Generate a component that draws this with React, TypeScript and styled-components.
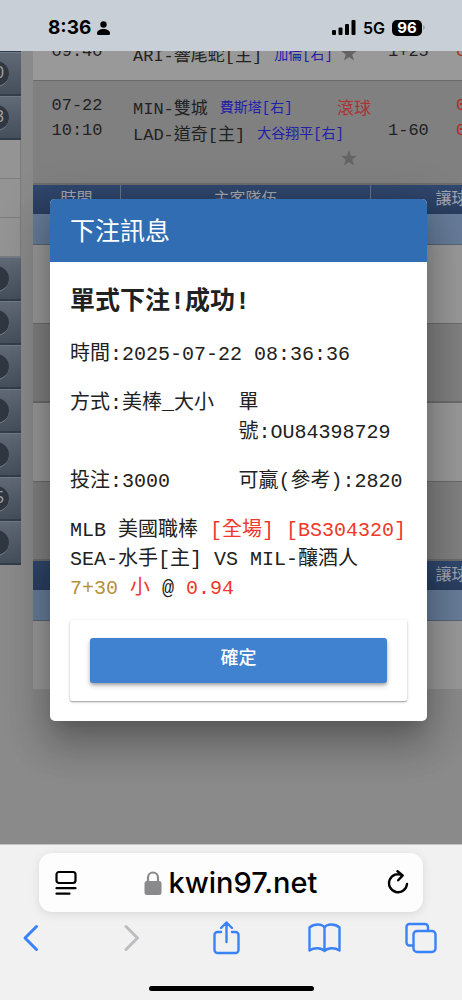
import React from "react";
import styled, { createGlobalStyle } from "styled-components";

const mono = `"Liberation Mono", "Noto Sans CJK TC", monospace`;
const sans = `Inter, "Liberation Sans", sans-serif`;

const Global = createGlobalStyle`
  *, *::before, *::after { box-sizing: border-box; }
  body { margin: 0; background: #888; }
  button, input { font: inherit; border: 0; padding: 0; background: none; }
`;

const Screen = styled.div`
  display: flex;
  flex-direction: column;
  min-height: 100vh;
  font-family: ${mono};
  overflow: hidden;
`;

/* Phone status bar */

const StatusBar = styled.header`
  display: flex;
  align-items: center;
  justify-content: space-between;
  height: 51px;
  padding: 4px 37px 0 48px;
  background: #c9cfd7;
  color: #000;
  font-family: ${sans};
`;

const StatusGroup = styled.div<{ $gap: number }>`
  display: flex;
  align-items: center;
  gap: ${(p) => p.$gap}px;
`;

const Clock = styled.span`
  font-size: 19px;
  font-weight: 700;
`;

const Network = styled.span`
  font-size: 16px;
  font-weight: 600;
`;

const Battery = styled.span`
  width: 30px;
  height: 16px;
  border-radius: 5px;
  background: #000;
  color: #fff;
  font-size: 15px;
  font-weight: 700;
  line-height: 16px;
  text-align: center;
`;

const BatteryGroup = styled.span`
  display: flex;
  align-items: center;
  gap: 1px;
`;

/* Page behind the dialog */

const Page = styled.main`
  position: relative;
  display: flex;
  align-items: flex-start;
  gap: 12px;
  flex: 1;
  overflow: hidden;
  background: #8a8a8a;
`;

const Sidebar = styled.nav`
  flex: none;
  display: flex;
  flex-direction: column;
  width: 21px;
  margin-top: -43px;
`;

const MenuButton = styled.button`
  display: flex;
  align-items: center;
  justify-content: flex-end;
  height: 44px;
  padding-right: 12px;
  border-top: 1px solid #6f7a87;
  border-bottom: 2px solid #333d4a;
  background: linear-gradient(#606975, #454f5c);
`;

const Count = styled.span`
  flex: none;
  display: block;
  width: 26px;
  height: 26px;
  padding-right: 5px;
  border-radius: 13px;
  border-bottom: 1px solid #77808a;
  background: #303741;
  color: #a0a0a0;
  font-family: "Liberation Sans", sans-serif;
  font-size: 16px;
  line-height: 24px;
  text-align: right;
`;

const MenuItem = styled.a`
  height: 39px;
  border-bottom: 1px solid #7c7c7c;
  border-right: 1px solid #7c7c7c;
  background: #949494;
`;

const Board = styled.div`
  flex: none;
  margin-top: -49px;
`;

const Table = styled.table`
  width: 500px;
  table-layout: fixed;
  border-collapse: separate;
  border-spacing: 0;
  color: #222;
  font-size: 17px;
`;

const Head = styled.th`
  height: 29px;
  padding: 0;
  border-right: 1px solid #66738a;
  background: linear-gradient(#31486f, #2a3e60);
  color: #a3a7ae;
  font-size: 16px;
  font-weight: 400;
  line-height: 24px;
`;

const LeagueCell = styled.td`
  height: 31px;
  padding: 0;
  border-bottom: 1px solid #566478;
  background: #677c99;
`;

const Cell = styled.td<{ $dark?: boolean; $height?: number; $last?: boolean }>`
  height: ${(p) => p.$height ?? 79}px;
  padding: 12px 0 0;
  border-bottom: ${(p) => (p.$last ? 0 : p.$dark ? 2 : 1)}px solid #6c6c6c;
  background: ${(p) => (p.$dark ? "#808080" : "#999")};
  vertical-align: top;
`;

const Times = styled.div`
  line-height: 25px;
  text-align: center;
`;

const TeamLine = styled.div`
  display: flex;
  align-items: center;
  gap: 8px;
  height: 26px;
  padding-left: 12px;
  white-space: nowrap;
`;

const Pitcher = styled.span`
  margin-left: 4px;
  color: #2020a8;
  font-size: 14px;
`;

const Live = styled.span`
  margin-left: auto;
  color: #a83636;
`;

const StarSlot = styled.span`
  display: flex;
  margin-left: auto;
  margin-right: 14px;
`;

const Odds = styled.div`
  display: grid;
  grid-template-columns: 68px 1fr;
  padding-left: 17px;
  line-height: 25px;
`;

const Price = styled.span`
  color: #b02c20;
`;

/* Dialog */

const Overlay = styled.div`
  position: absolute;
  inset: 0;
  display: flex;
  align-items: flex-start;
  padding: 148px 35px 0 50px;
`;

const Dialog = styled.section`
  flex: 1;
  min-width: 0;
  overflow: hidden;
  border-radius: 5px;
  background: #fff;
  color: #212121;
  font-size: 20px;
  line-height: 29px;
  box-shadow: 0 9px 46px 8px rgba(0, 0, 0, 0.14), 0 11px 15px -7px rgba(0, 0, 0, 0.12),
    0 24px 38px 3px rgba(0, 0, 0, 0.2);
`;

const Title = styled.h2`
  margin: 0;
  padding: 7px 20px 0;
  background: #316db2;
  color: #fff;
  font-size: 25px;
  font-weight: 400;
  line-height: 56px;
`;

const Body = styled.div`
  display: flex;
  flex-direction: column;
  gap: 20px;
  padding: 24px 20px 17px;
`;

const Result = styled.h3`
  margin: 0;
  font-size: 25px;
  font-weight: 600;
  line-height: 34px;
`;

const Line = styled.p`
  margin: 0;
`;

const Pair = styled.div`
  display: grid;
  grid-template-columns: 1fr 1fr;
`;

const Mark = styled.span<{ $tone: "red" | "gold" }>`
  color: ${(p) => (p.$tone === "red" ? "#f0372b" : "#b5913a")};
`;

const Actions = styled.div`
  display: flex;
  margin: 0 20px 20px;
  padding: 18px 20px;
  border-radius: 2px;
  box-shadow: 0 1px 3px rgba(0, 0, 0, 0.24), 0 1px 1px rgba(0, 0, 0, 0.2);
`;

const Confirm = styled.button`
  flex: 1;
  height: 45px;
  padding-bottom: 2px;
  border-radius: 3px;
  background: #4082cf;
  color: #fff;
  font-size: 18px;
  font-weight: 500;
  box-shadow: 0 2px 3px rgba(0, 0, 0, 0.24), 0 3px 6px rgba(0, 0, 0, 0.16);
`;

/* Browser controls */

const BrowserBar = styled.footer`
  display: flex;
  flex-direction: column;
  padding: 8px 0 9px;
  border-top: 1px solid #c4c4c6;
  background: #f1f1f2;
  font-family: ${sans};
`;

const AddressBar = styled.div`
  display: flex;
  align-items: center;
  justify-content: space-between;
  height: 59px;
  margin: 0 39px;
  padding: 0 13px 0 15px;
  border-radius: 13px;
  background: #fdfdfd;
  box-shadow: 0 2px 10px rgba(0, 0, 0, 0.1);
`;

const Address = styled.label`
  display: flex;
  align-items: center;
  gap: 7px;
`;

const AddressInput = styled.input`
  width: 152px;
  color: #000;
  font-size: 29px;
  font-weight: 500;
`;

const IconButton = styled.button`
  display: flex;
  flex: none;
`;

const Toolbar = styled.nav`
  display: flex;
  align-items: center;
  justify-content: space-between;
  height: 52px;
  padding: 0 24px 0 14px;
`;

const HomeIndicator = styled.div`
  width: 165px;
  height: 5px;
  margin: 22px auto 0;
  border-radius: 3px;
  background: #000;
`;

const Star = () => (
  <svg width="16" height="16" viewBox="0 0 16 16" fill="#646464" aria-hidden="true">
    <path d="M8 0l2 5.800 6 .1-4.800 3.700 1.800 6L8 12.100 3 15.600l1.800-6L0 5.900l6-.1z" />
  </svg>
);

const stroke = {
  fill: "none",
  strokeWidth: 2.4,
  strokeLinecap: "round" as const,
  strokeLinejoin: "round" as const,
};

const ToolIcon = ({ color = "#3a82f7", children }: { color?: string; children: React.ReactNode }) => (
  <svg width="34" height="36" viewBox="0 0 34 36" stroke={color} {...stroke} aria-hidden="true">
    {children}
  </svg>
);

const HeadRow = () => (
  <tr>
    <Head>時間</Head>
    <Head>主客隊伍</Head>
    <Head>讓球</Head>
  </tr>
);

const LeagueRow = () => (
  <tr>
    <LeagueCell colSpan={3} />
  </tr>
);

const EmptyRow = ({ dark, height, last }: { dark?: boolean; height?: number; last?: boolean }) => (
  <tr>
    <Cell colSpan={3} $dark={dark} $height={height} $last={last} />
  </tr>
);

const closedMenus = ["", "", "", "", "", "5", ""];

export default function App() {
  return (
    <Screen>
      <Global />
      <StatusBar>
        <StatusGroup $gap={6}>
          <Clock>8:36</Clock>
          <svg width="13" height="14" viewBox="0 0 13 14" aria-hidden="true">
            <circle cx="6.500" cy="3.500" r="3.200" />
            <path d="M0 12.500C0 9.500 3 8 6.500 8S13 9.500 13 12.500Q13 14 11.500 14H1.500Q0 14 0 12.500z" />
          </svg>
        </StatusGroup>
        <StatusGroup $gap={7}>
          <svg width="24" height="15" viewBox="0 0 24 15" aria-hidden="true">
            <rect x="0" y="10" width="4" height="5" rx="1" />
            <rect x="6.500" y="7.500" width="4" height="7.500" rx="1" />
            <rect x="13" y="4" width="4" height="11" rx="1" />
            <rect x="19.500" y="0" width="4" height="15" rx="1" />
          </svg>
          <Network>5G</Network>
          <BatteryGroup>
            <Battery>96</Battery>
            <svg width="2" height="5" viewBox="0 0 2 5" fill="#a0a5ac" aria-hidden="true">
              <path d="M0 0Q2 1 2 2.500T0 5z" />
            </svg>
          </BatteryGroup>
        </StatusGroup>
      </StatusBar>

      <Page>
        <Sidebar>
          <MenuButton />
          <MenuButton>
            <Count>0</Count>
          </MenuButton>
          <MenuButton>
            <Count>3</Count>
          </MenuButton>
          <MenuItem href="#" />
          <MenuItem href="#" />
          <MenuItem href="#" />
          {closedMenus.map((count, i) => (
            <MenuButton key={i}>
              <Count>{count}</Count>
            </MenuButton>
          ))}
        </Sidebar>

        <Board>
          <Table>
            <colgroup>
              <col width="88" />
              <col width="250" />
              <col width="162" />
            </colgroup>
            <tbody>
              <tr>
                <Cell>
                  <Times>
                    07-22
                    <br />
                    09:40
                  </Times>
                </Cell>
                <Cell>
                  <TeamLine />
                  <TeamLine>
                    <span>ARI-響尾蛇[主]</span>
                    <Pitcher>加倫[右]</Pitcher>
                    <StarSlot>
                      <Star />
                    </StarSlot>
                  </TeamLine>
                </Cell>
                <Cell>
                  <Odds>
                    <span />
                    <Price>0.94</Price>
                    <span>1+25</span>
                    <Price>0.94</Price>
                  </Odds>
                </Cell>
              </tr>
              <tr>
                <Cell $dark $height={104}>
                  <Times>
                    07-22
                    <br />
                    10:10
                  </Times>
                </Cell>
                <Cell $dark $height={104}>
                  <TeamLine>
                    <span>MIN-雙城</span>
                    <Pitcher>費斯塔[右]</Pitcher>
                    <Live>滾球</Live>
                  </TeamLine>
                  <TeamLine>
                    <span>LAD-道奇[主]</span>
                    <Pitcher>大谷翔平[右]</Pitcher>
                  </TeamLine>
                  <TeamLine>
                    <StarSlot>
                      <Star />
                    </StarSlot>
                  </TeamLine>
                </Cell>
                <Cell $dark $height={104}>
                  <Odds>
                    <span />
                    <Price>0.94</Price>
                    <span>1-60</span>
                    <Price>0.94</Price>
                  </Odds>
                </Cell>
              </tr>
              <HeadRow />
              <LeagueRow />
              <EmptyRow />
              <EmptyRow dark />
              <EmptyRow />
              <EmptyRow dark />
              <HeadRow />
              <LeagueRow />
              <EmptyRow height={68} last />
            </tbody>
          </Table>
        </Board>

        <Overlay>
          <Dialog role="dialog" aria-modal="true" aria-labelledby="bet-title">
            <Title id="bet-title">下注訊息</Title>
            <Body>
              <Result>單式下注!成功!</Result>
              <Line>時間:2025-07-22 08:36:36</Line>
              <Pair>
                <Line>方式:美棒_大小</Line>
                <Line>單號:OU84398729</Line>
              </Pair>
              <Pair>
                <Line>投注:3000</Line>
                <Line>可贏(參考):2820</Line>
              </Pair>
              <Line>
                MLB 美國職棒 <Mark $tone="red">[全場] [BS304320]</Mark>
                <br />
                SEA-水手[主] VS MIL-釀酒人
                <br />
                <Mark $tone="gold">7+30</Mark> <Mark $tone="red">小</Mark> @ <Mark $tone="red">0.94</Mark>
              </Line>
            </Body>
            <Actions>
              <Confirm type="button">確定</Confirm>
            </Actions>
          </Dialog>
        </Overlay>
      </Page>

      <BrowserBar>
        <AddressBar>
          <IconButton type="button" aria-label="Page settings">
            <svg width="24" height="26" viewBox="0 0 24 26" stroke="#000" {...stroke} strokeWidth={2.2} aria-hidden="true">
              <rect x="2.500" y="2" width="19" height="11" rx="2.500" />
              <path d="M2.500 18.200h19M2.500 23.700h13" />
            </svg>
          </IconButton>
          <Address>
            <svg width="18" height="24" viewBox="0 0 18 24" aria-hidden="true">
              <rect x="0.500" y="10" width="17" height="14" rx="2.500" fill="#8a8a8d" />
              <path d="M4 11V6.500a5 5 0 0 1 10 0V11" fill="none" stroke="#8a8a8d" strokeWidth="2.200" />
            </svg>
            <AddressInput aria-label="Address" defaultValue="kwin97.net" />
          </Address>
          <IconButton type="button" aria-label="Reload">
            <svg width="24" height="26" viewBox="0 0 24 26" stroke="#000" {...stroke} aria-hidden="true">
              <path d="M16.500 5.400A9 9 0 1 0 21 14M11.500 1.200L16.700 5.400L12.200 10.300" />
            </svg>
          </IconButton>
        </AddressBar>
        <Toolbar>
          <IconButton type="button" aria-label="Back">
            <ToolIcon>
              <path d="M22.500 6.500L11 18L22.500 29.500" strokeWidth="3" />
            </ToolIcon>
          </IconButton>
          <IconButton type="button" aria-label="Forward">
            <ToolIcon color="#bdbdbf">
              <path d="M14 6.500L25.500 18L14 29.500" strokeWidth="3" />
            </ToolIcon>
          </IconButton>
          <IconButton type="button" aria-label="Share">
            <ToolIcon>
              <path d="M12 12H8.500a3 3 0 0 0-3 3v15a3 3 0 0 0 3 3h18a3 3 0 0 0 3-3V15a3 3 0 0 0-3-3H23M17.500 22V2.500M12 8l5.500-5.500L23 8" />
            </ToolIcon>
          </IconButton>
          <IconButton type="button" aria-label="Bookmarks">
            <ToolIcon>
              <path d="M17.500 7.500C15 3.500 7 3.500 2.500 7.500V30.500C7 27.500 14 27.500 17.500 31C21 27.500 28 27.500 32.500 30.500V7.500C28 3.500 20 3.500 17.500 7.500V31" />
            </ToolIcon>
          </IconButton>
          <IconButton type="button" aria-label="Tabs">
            <ToolIcon>
              <rect x="9.500" y="11" width="22" height="21" rx="3.500" />
              <path d="M9 25.500H5.500a3 3 0 0 1-3-3V7a3 3 0 0 1 3-3H21a3 3 0 0 1 3 3V10.500" />
            </ToolIcon>
          </IconButton>
        </Toolbar>
        <HomeIndicator />
      </BrowserBar>
    </Screen>
  );
}
